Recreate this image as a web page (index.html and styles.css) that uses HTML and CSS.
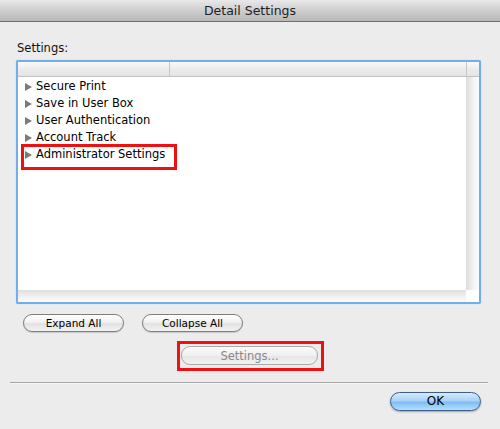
FILE: index.html
```html
<!DOCTYPE html>
<html>
<head>
<meta charset="utf-8">
<link rel="stylesheet" href="styles.css">
</head>
<body>
<div class="window">
  <div class="titlebar">Detail Settings</div>
  <div class="content">
    <div class="label">Settings:</div>
    <div class="frame">
      <div class="hdr-main"><div class="hdr-col1"></div><div class="hdr-col2"></div></div>
      <div class="hdr-corner"></div>
      <div class="list">
        <div class="row"><span class="tri"></span>Secure Print</div>
        <div class="row"><span class="tri"></span>Save in User Box</div>
        <div class="row"><span class="tri"></span>User Authentication</div>
        <div class="row"><span class="tri"></span>Account Track</div>
        <div class="row hl"><span class="tri"></span>Administrator Settings<span class="redbox"></span></div>
      </div>
      <div class="vscroll"></div>
      <div class="hscroll"></div>
      <div class="corner"></div>
    </div>
    <div class="btnrow">
      <button class="pill">Expand All</button>
      <button class="pill">Collapse All</button>
    </div>
    <div class="setrow">
      <div class="redwrap"><button class="pill disabled">Settings...</button></div>
    </div>
  </div>
  <div class="sep"></div>
  <div class="okrow"><button class="ok">OK</button></div>
</div>
</body>
</html>
```
FILE: styles.css
```css
html, body {
  margin: 0;
  padding: 0;
  background: #ececec;
}
.window {
  width: 500px;
  height: 429px;
  background: #ececec;
  font-family: "DejaVu Sans", "Liberation Sans", sans-serif;
  color: #000;
  display: flex;
  flex-direction: column;
}
.titlebar {
  height: 21px;
  line-height: 21px;
  text-align: center;
  font-size: 12.5px;
  color: #1e1e1e;
  background: linear-gradient(#e9e9e9, #c9c9c9 60%, #b8b8b8);
  border-bottom: 1px solid #6e6e6e;
}
.content {
  padding: 19px 19px 0 16px;
  display: flex;
  flex-direction: column;
}
.label {
  font-size: 11.5px;
  height: 14px;
  line-height: 14px;
  padding-left: 1px;
  margin-bottom: 5px;
  color: #111;
}
.frame {
  width: 461px;
  height: 240px;
  border: 2px solid #74aee6;
  border-radius: 2px;
  background: #fff;
  display: grid;
  grid-template-columns: 1fr 13px;
  grid-template-rows: 15px 1fr 12px;
  box-shadow: 0 0 1px #8fc0ee;
}
.hdr-main {
  display: flex;
  background: linear-gradient(#fafafa, #ececec 50%, #e4e4e4);
  border-bottom: 1px solid #c2c2c2;
}
.hdr-col1 {
  width: 151px;
  border-right: 1px solid #c6c6c6;
}
.hdr-col2 { flex: 1; }
.hdr-corner {
  background: linear-gradient(#fafafa, #ececec 50%, #e4e4e4);
  border-bottom: 1px solid #c2c2c2;
  border-left: 1px solid #c6c6c6;
}
.list {
  padding-top: 1px;
  display: flex;
  flex-direction: column;
}
.row {
  position: relative;
  height: 17px;
  line-height: 17px;
  font-size: 11.5px;
  display: flex;
  align-items: center;
  padding-left: 7px;
  white-space: nowrap;
  color: #000;
}
.tri {
  width: 0;
  height: 0;
  border-top: 4px solid transparent;
  border-bottom: 4px solid transparent;
  border-left: 7px solid #7b7b7b;
  margin-right: 4px;
}
.redbox {
  position: absolute;
  left: 3px;
  top: -2px;
  width: 150px;
  height: 20px;
  border: 3px solid #ee1111;
}
.vscroll {
  background: linear-gradient(to right, #dcdcdc, #f4f4f4 60%, #fbfbfb);
}
.hscroll {
  background: linear-gradient(#dedede, #f3f3f3 60%, #fafafa);
}
.corner { background: #fff; }
.btnrow {
  margin-top: 10px;
  padding-left: 7px;
  display: flex;
  gap: 18px;
}
.pill {
  width: 101px;
  height: 18px;
  padding: 0;
  border: 1px solid #7e7e7e;
  border-radius: 9px;
  background: linear-gradient(#ffffff, #f1f1f1 45%, #e2e2e2 55%, #f3f3f3);
  font-family: "DejaVu Sans", "Liberation Sans", sans-serif;
  font-size: 10.5px;
  color: #000;
  line-height: 16px;
  box-shadow: 0 1px 1px rgba(0,0,0,0.15);
}
.setrow {
  margin-top: 9px;
  display: flex;
  padding-left: 161px;
}
.redwrap {
  border: 3px solid #ee1111;
  padding: 2px 3px 3px 1px;
  display: flex;
}
.pill.disabled {
  width: 137px;
  height: 19px;
  color: #888;
  font-size: 11.5px;
  border-color: #aaa;
  background: linear-gradient(#fbfbfb, #efefef 50%, #e6e6e6 55%, #f2f2f2);
  box-shadow: none;
}
.sep {
  margin: 11px 12px 0 10px;
  height: 1px;
  background: #a6a6a6;
  border-bottom: 1px solid #f6f6f6;
}
.okrow {
  display: flex;
  justify-content: flex-end;
  padding: 8px 19px 0 0;
}
.ok {
  width: 91px;
  height: 19px;
  padding: 0;
  border: 1px solid #3d5e8c;
  border-radius: 10px;
  background: linear-gradient(#d6ebfd, #a8d2f7 45%, #7fbcf3 55%, #b4e0ff);
  font-family: "DejaVu Sans", "Liberation Sans", sans-serif;
  font-size: 12px;
  color: #000;
  line-height: 17px;
  box-shadow: 0 1px 2px rgba(0,0,0,0.3);
}
```
